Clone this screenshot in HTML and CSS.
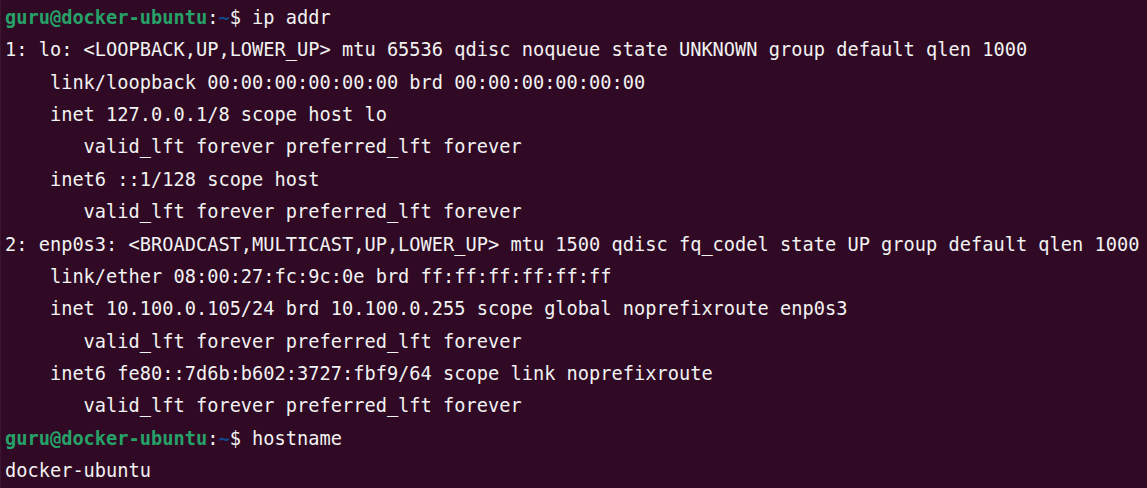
FILE: index.html
```html
<!DOCTYPE html>
<html lang="en">
<head>
<meta charset="utf-8">
<title>Terminal</title>
<link rel="stylesheet" href="styles.css">
</head>
<body>
<main class="terminal">
<div class="line"><span class="user">guru@docker-ubuntu</span>:<span class="path">~</span>$ ip addr</div>
<div class="line">1: lo: &lt;LOOPBACK,UP,LOWER_UP&gt; mtu 65536 qdisc noqueue state UNKNOWN group default qlen 1000</div>
<div class="line">    link/loopback 00:00:00:00:00:00 brd 00:00:00:00:00:00</div>
<div class="line">    inet 127.0.0.1/8 scope host lo</div>
<div class="line">       valid_lft forever preferred_lft forever</div>
<div class="line">    inet6 ::1/128 scope host </div>
<div class="line">       valid_lft forever preferred_lft forever</div>
<div class="line">2: enp0s3: &lt;BROADCAST,MULTICAST,UP,LOWER_UP&gt; mtu 1500 qdisc fq_codel state UP group default qlen 1000</div>
<div class="line">    link/ether 08:00:27:fc:9c:0e brd ff:ff:ff:ff:ff:ff</div>
<div class="line">    inet 10.100.0.105/24 brd 10.100.0.255 scope global noprefixroute enp0s3</div>
<div class="line">       valid_lft forever preferred_lft forever</div>
<div class="line">    inet6 fe80::7d6b:b602:3727:fbf9/64 scope link noprefixroute </div>
<div class="line">       valid_lft forever preferred_lft forever</div>
<div class="line"><span class="user">guru@docker-ubuntu</span>:<span class="path">~</span>$ hostname</div>
<div class="line">docker-ubuntu</div>
</main>
</body>
</html>
```
FILE: styles.css
```css
html, body {
  margin: 0;
  padding: 0;
  background: #300a24;
  height: 100%;
  overflow: hidden;
}
.terminal {
  box-sizing: border-box;
  height: 100%;
  padding: 2px 0 0 4px;
  border-left: 1px solid #3a1630;
  font-family: "DejaVu Sans Mono", "Liberation Mono", monospace;
  font-size: 18.67px;
  line-height: 32.36px;
  color: #f2f2f2;
}
.line {
  height: 32.36px;
  white-space: pre;
}
.user {
  color: #26a269;
  font-weight: bold;
}
.path {
  color: #12488b;
  font-weight: bold;
}
```
